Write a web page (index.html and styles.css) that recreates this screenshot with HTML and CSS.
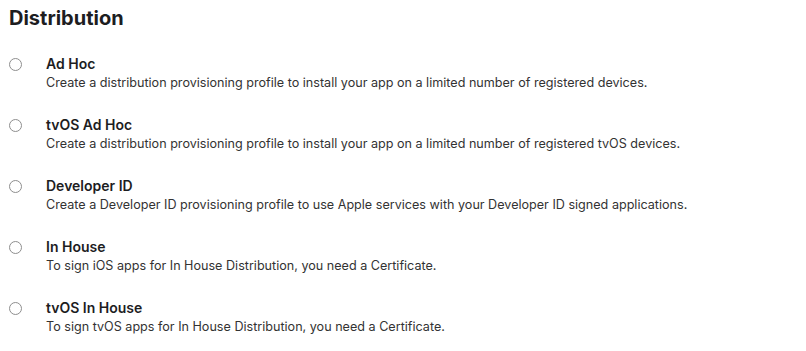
FILE: index.html
```html
<!DOCTYPE html>
<html lang="en">
<head>
    <meta charset="UTF-8">
    <title>Distribution</title>
    <link rel="stylesheet" href="styles.css">
</head>
<body>
    <section class="distribution">
        <h2>Distribution</h2>
        <ul class="options">
            <li class="option">
                <span class="radio"></span>
                <div class="option-text">
                    <h3>Ad Hoc</h3>
                    <p>Create a distribution provisioning profile to install your app on a limited number of registered devices.</p>
                </div>
            </li>
            <li class="option">
                <span class="radio"></span>
                <div class="option-text">
                    <h3>tvOS Ad Hoc</h3>
                    <p>Create a distribution provisioning profile to install your app on a limited number of registered tvOS devices.</p>
                </div>
            </li>
            <li class="option">
                <span class="radio"></span>
                <div class="option-text">
                    <h3>Developer ID</h3>
                    <p>Create a Developer ID provisioning profile to use Apple services with your Developer ID signed applications.</p>
                </div>
            </li>
            <li class="option">
                <span class="radio"></span>
                <div class="option-text">
                    <h3>In House</h3>
                    <p>To sign iOS apps for In House Distribution, you need a Certificate.</p>
                </div>
            </li>
            <li class="option">
                <span class="radio"></span>
                <div class="option-text">
                    <h3>tvOS In House</h3>
                    <p>To sign tvOS apps for In House Distribution, you need a Certificate.</p>
                </div>
            </li>
        </ul>
    </section>
</body>
</html>
```

FILE: styles.css
```css
body {
    margin: 0;
    background: #ffffff;
    color: #1d1d1f;
    font-family: Inter, 'Liberation Sans', Arial, sans-serif;
}

.distribution {
    padding: 6px 9px;
}

.distribution h2 {
    margin: 0;
    font-size: 20px;
    line-height: 24px;
    font-weight: 700;
    color: #1d1d1f;
}

.options {
    list-style: none;
    margin: 25px 0 0;
    padding: 0;
    display: flex;
    flex-direction: column;
    gap: 24px;
}

.option {
    display: flex;
    align-items: flex-start;
}

.radio {
    flex: none;
    width: 11px;
    height: 11px;
    margin-top: 3px;
    margin-right: 24px;
    border: 1px solid #8e8e8e;
    border-radius: 50%;
    background: #ffffff;
}

.option-text h3 {
    margin: 0;
    font-size: 14px;
    line-height: 18px;
    font-weight: 600;
    color: #1d1d1f;
}

.option-text p {
    margin: 1px 0 0;
    font-size: 12.6px;
    line-height: 18px;
    color: #333333;
}
```
